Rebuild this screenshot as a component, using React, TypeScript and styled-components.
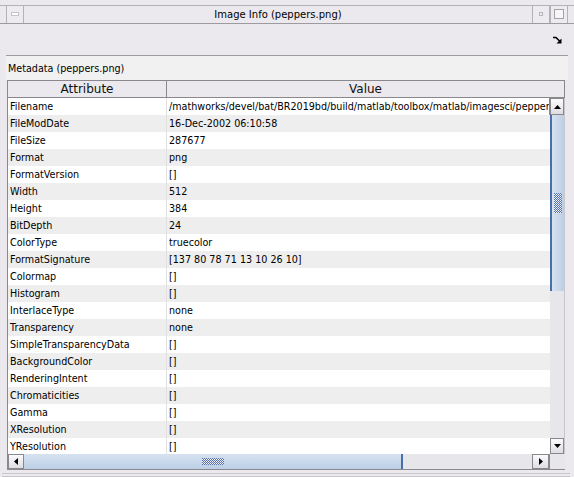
import React from "react";
import styled, { createGlobalStyle } from "styled-components";

const GlobalStyle = createGlobalStyle`
  html, body { margin: 0; padding: 0; background: #ebe9ed; }
  body { font-family: "DejaVu Sans", "Liberation Sans", sans-serif; }
`;

const rows: [string, string][] = [
  ["Filename", "/mathworks/devel/bat/BR2019bd/build/matlab/toolbox/matlab/imagesci/peppers.png"],
  ["FileModDate", "16-Dec-2002 06:10:58"],
  ["FileSize", "287677"],
  ["Format", "png"],
  ["FormatVersion", "[]"],
  ["Width", "512"],
  ["Height", "384"],
  ["BitDepth", "24"],
  ["ColorType", "truecolor"],
  ["FormatSignature", "[137 80 78 71 13 10 26 10]"],
  ["Colormap", "[]"],
  ["Histogram", "[]"],
  ["InterlaceType", "none"],
  ["Transparency", "none"],
  ["SimpleTransparencyData", "[]"],
  ["BackgroundColor", "[]"],
  ["RenderingIntent", "[]"],
  ["Chromaticities", "[]"],
  ["Gamma", "[]"],
  ["XResolution", "[]"],
  ["YResolution", "[]"],
];

const Window = styled.div`
  width: 574px;
  height: 477px;
  box-sizing: border-box;
  background: #ebe9ed;
  display: flex;
  flex-direction: column;
  overflow: hidden;
  font-size: 9.6px;
  color: #000;
`;

const TitleBar = styled.div`
  margin-top: 5px;
  height: 17px;
  border-top: 1px solid #b4b2b8;
  border-bottom: 1px solid #9d9ba0;
  display: flex;
  align-items: stretch;
`;

const TitleButton = styled.div<{ $edge?: boolean }>`
  width: 16px;
  margin-left: ${(p) => (p.$edge ? "6px" : "0")};
  border-left: 1px solid #b4b2b8;
  border-right: 1px solid #b4b2b8;
  display: flex;
  align-items: center;
  justify-content: center;
  background: #edebef;
`;

const MinMark = styled.span`
  width: 6px;
  height: 2px;
  border: 1px solid #c5c3c8;
  background: #fff;
`;

const SmallMark = styled.span`
  width: 2px;
  height: 2px;
  border: 1px solid #b8b6bb;
`;

const BoxMark = styled.span`
  width: 8px;
  height: 8px;
  border: 1px solid #a5a3a8;
  background: #f6f6f6;
`;

const Title = styled.div`
  flex: 1;
  display: flex;
  align-items: center;
  justify-content: center;
  font-size: 10px;
  padding-top: 1px;
`;

const RightButtons = styled.div`
  display: flex;
  margin-right: 6px;
`;

const Toolbar = styled.div`
  height: 31px;
  margin: 0 6px;
  border-bottom: 1px solid #9d9ba0;
  display: flex;
  align-items: center;
  justify-content: flex-end;
  padding-right: 6px;
  padding-top: 1px;
`;

const Label = styled.div`
  height: 24px;
  margin: 0 6px 0 6px;
  background: #f1f1f1;
  display: flex;
  align-items: center;
  padding-left: 2px;
  font-size: 9.6px;
`;

const Frame = styled.div`
  margin-left: 7px;
  width: 558px;
  display: flex;
  flex-direction: column;
  background: #f1f1f1;
`;

const Header = styled.div`
  display: flex;
  height: 18px;
`;

const HeaderCell = styled.div<{ $w?: number }>`
  ${(p) => (p.$w ? `width: ${p.$w}px;` : "flex: 1;")}
  box-sizing: border-box;
  border: 1px solid #8a888d;
  border-left-width: ${(p) => (p.$w ? "1px" : "0")};
  background: #ebe9ed;
  display: flex;
  align-items: center;
  justify-content: center;
  font-size: 12px;
  color: #111;
`;

const Body = styled.div`
  display: flex;
  height: 356px;
`;

const Rows = styled.div`
  width: 544px;
  overflow: hidden;
  display: flex;
  flex-direction: column;
  border-left: 1px solid #8a888d;
  box-sizing: border-box;
`;

const Row = styled.div<{ $alt: boolean; $first?: boolean }>`
  display: flex;
  height: 17px;
  flex: none;
  background: ${(p) => (p.$alt ? "#eeeeee" : "#ffffff")};
  box-sizing: border-box;
  ${(p) => (p.$first ? "border-right: 1px solid #8a888d;" : "")}
`;

const Cell = styled.div<{ $w?: number }>`
  ${(p) => (p.$w ? `width: ${p.$w}px; border-right: 1px solid #e0e0e0;` : "flex: 1;")}
  flex-shrink: 0;
  box-sizing: border-box;
  padding-left: 2px;
  display: flex;
  align-items: center;
  white-space: nowrap;
  overflow: hidden;
  font-size: 9.6px;
`;

const VScroll = styled.div`
  width: 14px;
  display: flex;
  flex-direction: column;
  background: #e7e6ea;
  border-right: 1px solid #c8c6cb;
`;

const ArrowButton = styled.div<{ $w: number; $h: number }>`
  width: ${(p) => p.$w}px;
  height: ${(p) => p.$h}px;
  flex: none;
  box-sizing: border-box;
  border: 1px solid #8a888d;
  background: linear-gradient(#fbfbfc, #dedde2);
  display: flex;
  align-items: center;
  justify-content: center;
`;

const Thumb = styled.div<{ $horizontal?: boolean }>`
  flex: none;
  box-sizing: border-box;
  display: flex;
  align-items: center;
  justify-content: center;
  ${(p) =>
    p.$horizontal
      ? `width: 379px; height: 100%; border-right: 2px solid #4a6ea9; background: linear-gradient(#d6e2f0, #bccfe5);`
      : `height: 176px; width: 100%; border-left: 2px solid #4a6ea9; background: linear-gradient(90deg, #d6e2f0, #bccfe5);`}
`;

const Spacer = styled.div`
  flex: 1;
`;

const HScroll = styled.div`
  display: flex;
  height: 15px;
  background: #e7e6ea;
  border-left: 1px solid #8a888d;
  border-bottom: 1px solid #8a888d;
`;

const Corner = styled.div`
  width: 15px;
  background: #e7e6ea;
  border-left: 1px solid #8a888d;
`;

const Bottom = styled.div`
  margin: 3px 4px 0 2px;
  height: 2px;
  border-top: 1px solid #c9c7cc;
  border-bottom: 1px solid #c9c7cc;
`;

const Grip = ({ cols, rows: r }: { cols: number; rows: number }) => {
  const dots: React.ReactNode[] = [];
  for (let y = 0; y < r; y++) {
    for (let x = 0; x < cols; x++) {
      if ((x + y) % 2 === 0) {
        dots.push(<rect key={`d${x}-${y}`} x={x} y={y} width={1} height={1} fill="#5a75a6" />);
      } else if (y % 2 === 1) {
        dots.push(<rect key={`w${x}-${y}`} x={x} y={y} width={1} height={1} fill="#f4f8fc" />);
      }
    }
  }
  return (
    <svg width={cols} height={r} viewBox={`0 0 ${cols} ${r}`} shapeRendering="crispEdges">
      {dots}
    </svg>
  );
};

const Tri = ({ dir }: { dir: "up" | "down" | "left" | "right" }) => {
  const pts = {
    up: "0,4 7,4 3.5,0",
    down: "0,0 7,0 3.5,4",
    left: "4,0 4,7 0,3.5",
    right: "0,0 0,7 4,3.5",
  }[dir];
  const vertical = dir === "up" || dir === "down";
  return (
    <svg width={vertical ? 7 : 4} height={vertical ? 4 : 7} viewBox={vertical ? "0 0 7 4" : "0 0 4 7"}>
      <polygon points={pts} fill="#000" />
    </svg>
  );
};

const DockIcon = () => (
  <svg width="9" height="8" viewBox="0 0 9 8">
    <path d="M0 1.5 H3 L7 5.5" stroke="#000" strokeWidth="1.6" fill="none" />
    <polygon points="8.5,2.5 8.5,7.5 3.5,7.5" fill="#000" />
  </svg>
);

export default function App() {
  return (
    <Window>
      <GlobalStyle />
      <TitleBar>
        <TitleButton $edge>
          <MinMark />
        </TitleButton>
        <Title>Image Info (peppers.png)</Title>
        <RightButtons>
          <TitleButton>
            <SmallMark />
          </TitleButton>
          <TitleButton>
            <BoxMark />
          </TitleButton>
        </RightButtons>
      </TitleBar>
      <Toolbar>
        <DockIcon />
      </Toolbar>
      <Label>Metadata (peppers.png)</Label>
      <Frame>
        <Header>
          <HeaderCell $w={160}>Attribute</HeaderCell>
          <HeaderCell>Value</HeaderCell>
        </Header>
        <Body>
          <Rows>
            {rows.map(([k, v], i) => (
              <Row key={k} $alt={i % 2 === 1} $first={i === 0}>
                <Cell $w={159}>{k}</Cell>
                <Cell>{v}</Cell>
              </Row>
            ))}
          </Rows>
          <VScroll>
            <ArrowButton $w={14} $h={17}>
              <Tri dir="up" />
            </ArrowButton>
            <Thumb>
              <Grip cols={8} rows={20} />
            </Thumb>
            <Spacer />
            <ArrowButton $w={14} $h={16}>
              <Tri dir="down" />
            </ArrowButton>
          </VScroll>
        </Body>
        <HScroll>
          <ArrowButton $w={16} $h={15}>
            <Tri dir="left" />
          </ArrowButton>
          <Thumb $horizontal>
            <Grip cols={22} rows={7} />
          </Thumb>
          <Spacer />
          <ArrowButton $w={17} $h={15}>
            <Tri dir="right" />
          </ArrowButton>
          <Corner />
        </HScroll>
      </Frame>
      <Bottom />
    </Window>
  );
}
